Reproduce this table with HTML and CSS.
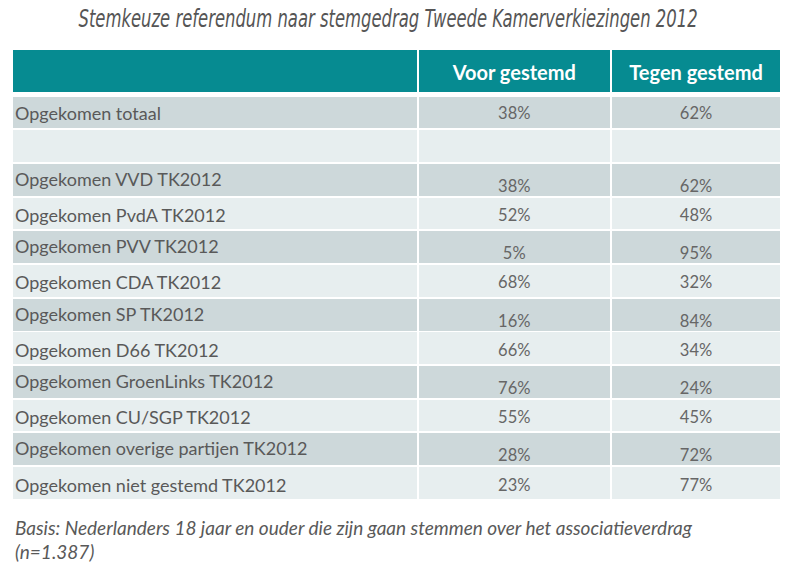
FILE: index.html
```html
<!DOCTYPE html>
<html lang="nl">
<head>
<meta charset="utf-8">
<title>Stemkeuze referendum</title>
<link rel="stylesheet" href="styles.css">
</head>
<body>
<h1 class="title"><span class="title-text">Stemkeuze referendum naar stemgedrag Tweede Kamerverkiezingen 2012</span></h1>
<div class="table">
  <div class="row head">
    <div class="cell"></div>
    <div class="cell hc">Voor gestemd</div>
    <div class="cell hc">Tegen gestemd</div>
  </div>
  <div class="row dark first">
    <div class="cell label">Opgekomen totaal</div>
    <div class="cell num">38%</div>
    <div class="cell num">62%</div>
  </div>
  <div class="row light">
    <div class="cell label"></div>
    <div class="cell num"></div>
    <div class="cell num"></div>
  </div>
  <div class="row dark low">
    <div class="cell label">Opgekomen VVD TK2012</div>
    <div class="cell num">38%</div>
    <div class="cell num">62%</div>
  </div>
  <div class="row light">
    <div class="cell label">Opgekomen PvdA TK2012</div>
    <div class="cell num">52%</div>
    <div class="cell num">48%</div>
  </div>
  <div class="row dark low">
    <div class="cell label">Opgekomen PVV TK2012</div>
    <div class="cell num">5%</div>
    <div class="cell num">95%</div>
  </div>
  <div class="row light">
    <div class="cell label">Opgekomen CDA TK2012</div>
    <div class="cell num">68%</div>
    <div class="cell num">32%</div>
  </div>
  <div class="row dark low">
    <div class="cell label">Opgekomen SP TK2012</div>
    <div class="cell num">16%</div>
    <div class="cell num">84%</div>
  </div>
  <div class="row light">
    <div class="cell label">Opgekomen D66 TK2012</div>
    <div class="cell num">66%</div>
    <div class="cell num">34%</div>
  </div>
  <div class="row dark low">
    <div class="cell label">Opgekomen GroenLinks TK2012</div>
    <div class="cell num">76%</div>
    <div class="cell num">24%</div>
  </div>
  <div class="row light">
    <div class="cell label">Opgekomen CU/SGP TK2012</div>
    <div class="cell num">55%</div>
    <div class="cell num">45%</div>
  </div>
  <div class="row dark low">
    <div class="cell label">Opgekomen overige partijen TK2012</div>
    <div class="cell num">28%</div>
    <div class="cell num">72%</div>
  </div>
  <div class="row light">
    <div class="cell label">Opgekomen niet gestemd TK2012</div>
    <div class="cell num">23%</div>
    <div class="cell num">77%</div>
  </div>
</div>
<p class="basis">Basis: Nederlanders 18 jaar en ouder die zijn gaan stemmen over het associatieverdrag<br>(n=1.387)</p>
</body>
</html>
```

FILE: styles.css
```css
html, body {
  margin: 0;
  padding: 0;
  background: #ffffff;
}
body {
  width: 785px;
  height: 575px;
  overflow: hidden;
  font-family: Lato, "Liberation Sans", sans-serif;
  color: #595959;
}
.title {
  margin: 0;
  height: 50px;
  display: flex;
  align-items: center;
  justify-content: center;
  padding-right: 8px;
  padding-bottom: 14px;
  box-sizing: border-box;
  font-family: "Liberation Sans Narrow", "DejaVu Sans Condensed", "Liberation Sans", sans-serif;
  font-stretch: condensed;
  font-style: italic;
  font-weight: normal;
  font-size: 25px;
  color: #555555;
  white-space: nowrap;
}
.title-text {
  display: inline-block;
  transform: scaleX(0.73);
}
.table {
  margin-left: 13px;
  width: 767px;
}
.row {
  display: grid;
  grid-template-columns: 403.5px 191.5px 168px;
  column-gap: 2px;
  height: 31.7px;
  margin-top: 2px;
}
.row.head {
  height: 42px;
  margin-top: 0;
}
.row.first {
  margin-top: 4.6px;
}
.cell {
  display: flex;
  align-items: center;
  font-size: 18px;
  line-height: 20px;
  white-space: nowrap;
}
.head .cell {
  background: #068b91;
}
.hc {
  justify-content: center;
  color: #ffffff;
  font-weight: bold;
  font-size: 20px;
  padding-top: 2px;
}
.dark .cell {
  background: #cdd8da;
}
.light .cell {
  background: #e7eeef;
}
.label {
  padding-left: 2px;
  padding-top: 3px;
}
.num {
  justify-content: center;
  color: #666666;
  font-size: 16.5px;
  padding-top: 3px;
}
.first .label, .first .num {
  padding-top: 1px;
}
.low .label {
  padding-top: 0;
  padding-bottom: 2px;
}
.low .num {
  padding-top: 12px;
}
.basis {
  margin: 17px 0 0 15px;
  font-style: italic;
  font-size: 19px;
  line-height: 24px;
  color: #595959;
}
```
